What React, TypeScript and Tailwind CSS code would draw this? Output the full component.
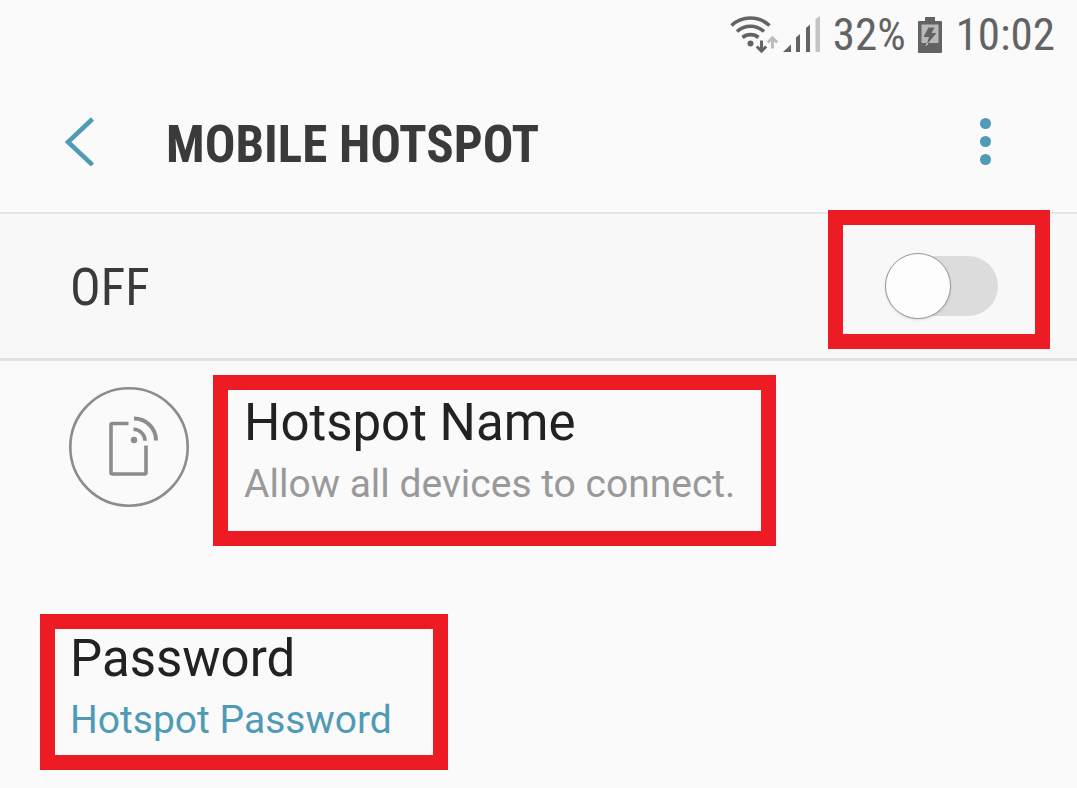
import { useState } from "react";

function WifiIcon() {
  return (
    <svg viewBox="0 0 50 42" className="h-[42px] w-[50px]" fill="none" aria-hidden="true">
      <g stroke="#636363" strokeWidth="3.6">
        <path d="M2.5 11.500A28 28 0 0 1 40.5 11.500" />
        <path d="M8 17.500A20 20 0 0 1 35 17.500" />
        <path d="M13.500 23.500A12.500 12.500 0 0 1 29.500 23.500" />
      </g>
      <circle cx="21.500" cy="29.500" r="3" fill="#636363" />
      <path d="M32.500 26.500V37M27.800 32.500L32.500 37.200L37.200 32.500" stroke="#636363" strokeWidth="3" />
      <path d="M43.500 34.500V24M38.800 28.500L43.500 23.800L48.200 28.500" stroke="#bcbcbc" strokeWidth="3" />
    </svg>
  );
}

function SignalIcon() {
  return (
    <svg viewBox="0 0 38 38" className="h-[38px] w-[38px]" aria-hidden="true">
      <g fill="#636363">
        <path d="M0 36L8 28.500V36Z" />
        <path d="M13 21.500L17 18V36H13Z" />
        <path d="M23 12L27 8.500V36H23Z" />
      </g>
      <path d="M32.500 3L37 0V36H32.500Z" fill="#c4c4c4" />
    </svg>
  );
}

function BatteryIcon() {
  return (
    <svg viewBox="0 0 24 36" className="h-9 w-6" aria-hidden="true">
      <path d="M7 0H17V4H23Q24 4 24 5V35Q24 36 23 36H1Q0 36 0 35V5Q0 4 1 4H7Z" fill="#636363" />
      <path d="M3.500 7.500H20.500V26H3.500Z" fill="#b9b9b9" />
      <path d="M10.500 10.500H16.500L13.500 16H18.500L8.500 28L11 20H5.500Z" fill="#636363" />
      <path d="M7.500 29L9 26H10.500L8.500 29Z" fill="#d5d5d5" />
    </svg>
  );
}

function HotspotDeviceIcon() {
  return (
    <svg viewBox="0 0 120 120" className="size-[120px] shrink-0" fill="none" stroke="#8c8c8c" aria-hidden="true">
      <circle cx="60" cy="60" r="58.700" strokeWidth="2.600" />
      <path d="M59.500 36.500H43.500Q42 36.500 42 38V85.500Q42 87 43.500 87H75.500Q77 87 77 85.500V58.500" strokeWidth="3.600" />
      <path d="M64.500 42.300A11.500 11.500 0 0 1 76 53.800" strokeWidth="3.600" />
      <path d="M65 31.500A22 22 0 0 1 87 53.500" strokeWidth="4" />
      <circle cx="65" cy="53" r="3.200" fill="#8c8c8c" stroke="none" />
    </svg>
  );
}

export default function App() {
  const [enabled, setEnabled] = useState(false);

  return (
    <div className="min-h-screen bg-[#fafafa] font-['Roboto','Liberation_Sans',sans-serif] text-[#222222]">
      <div className="flex h-[70px] items-center justify-end pr-[22px] font-['Roboto_Condensed','Roboto',sans-serif] text-[45px] leading-[52px] text-[#636363]">
        <WifiIcon />
        <span className="ml-1">
          <SignalIcon />
        </span>
        <span className="ml-3">32%</span>
        <span className="ml-3">
          <BatteryIcon />
        </span>
        <span className="ml-[14px]">10:02</span>
      </div>

      <header className="flex h-[144px] items-center border-b-2 border-[#e6e6e6] pr-[70px] pl-[64px]">
        <button type="button" aria-label="Back" className="shrink-0">
          <svg viewBox="0 0 32 50" className="h-[50px] w-8" fill="none" stroke="#4f9bb5" strokeWidth="4.500" aria-hidden="true">
            <path d="M28.500 3L4 26L28.500 49" />
          </svg>
        </button>
        <h1 className="ml-[70px] grow pt-2 font-['Roboto_Condensed','Roboto',sans-serif] text-[51px] leading-[60px] font-bold text-[#3a3a3a]">
          MOBILE HOTSPOT
        </h1>
        <button type="button" aria-label="More options" className="flex w-[44px] flex-col items-center gap-[7px]">
          <span className="size-[11px] rounded-full bg-[#4f9bb5]" />
          <span className="size-[11px] rounded-full bg-[#4f9bb5]" />
          <span className="size-[11px] rounded-full bg-[#4f9bb5]" />
        </button>
      </header>

      <main>
        <div className="relative flex h-[147px] items-center justify-between border-b-3 border-[#e2e2e2] bg-[#f8f8f8] pr-[79px] pl-[70px]">
          <label
            htmlFor="hotspot-switch"
            className="pt-1 font-['Roboto_Condensed','Roboto',sans-serif] text-[51px] leading-[60px] text-[#3a3a3a]"
          >
            {enabled ? "ON" : "OFF"}
          </label>
          <input
            id="hotspot-switch"
            type="checkbox"
            role="switch"
            checked={enabled}
            onChange={(event) => setEnabled(event.target.checked)}
            className="relative h-[60px] w-[113px] cursor-pointer appearance-none rounded-full bg-[#dcdcdc] before:absolute before:top-[-3px] before:left-0 before:size-[66px] before:rounded-full before:border before:border-[#999999] before:bg-[#fdfdfd] before:shadow-sm before:content-[''] checked:bg-[#9ccbdb] checked:before:left-[47px]"
          />
          <div className="pointer-events-none absolute -top-1 right-[27px] h-[139px] w-[222px] border-15 border-[#ed1c24]" />
        </div>

        <section className="flex items-start gap-6 px-[69px] pt-[14px]">
          <div className="pt-3">
            <HotspotDeviceIcon />
          </div>
          <button type="button" className="border-15 border-[#ed1c24] px-4 pt-[3px] pb-4 text-left">
            <span className="block text-[51px] leading-[60px]">Hotspot Name</span>
            <span className="block pr-[10px] text-[39px] leading-[62px] text-[#999999]">Allow all devices to connect.</span>
          </button>
        </section>

        <section className="px-[40px] pt-[68px] pb-4">
          <button type="button" className="border-15 border-[#ed1c24] px-[15px] pb-1 text-left">
            <span className="block text-[51px] leading-[60px]">Password</span>
            <span className="block pr-[26px] text-[39px] leading-[62px] text-[#4f9bb5]">Hotspot Password</span>
          </button>
        </section>
      </main>
    </div>
  );
}
